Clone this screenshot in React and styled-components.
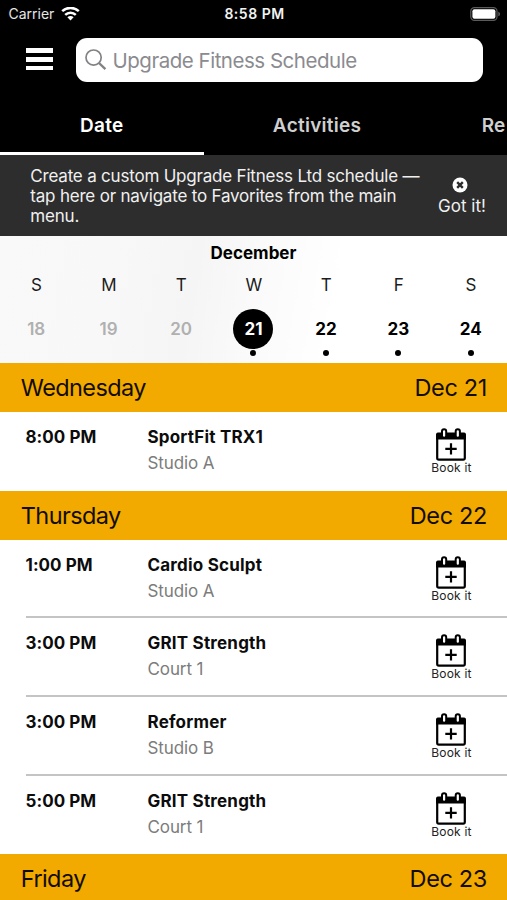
import React from "react"
import styled, { createGlobalStyle } from "styled-components"

const week = [
    { letter: "S", day: 18, past: true },
    { letter: "M", day: 19, past: true },
    { letter: "T", day: 20, past: true },
    { letter: "W", day: 21, selected: true },
    { letter: "T", day: 22 },
    { letter: "F", day: 23 },
    { letter: "S", day: 24 },
]

const schedule = [
    {
        name: "Wednesday",
        date: "Dec 21",
        classes: [{ time: "8:00 PM", title: "SportFit TRX1", room: "Studio A" }],
    },
    {
        name: "Thursday",
        date: "Dec 22",
        classes: [
            { time: "1:00 PM", title: "Cardio Sculpt", room: "Studio A" },
            { time: "3:00 PM", title: "GRIT Strength", room: "Court 1" },
            { time: "3:00 PM", title: "Reformer", room: "Studio B" },
            { time: "5:00 PM", title: "GRIT Strength", room: "Court 1" },
        ],
    },
    { name: "Friday", date: "Dec 23", classes: [] },
]

const WifiIcon = () => (
    <svg width="19" height="14" viewBox="0 0 19 14" fill="none" stroke="#fff" strokeWidth="2.5">
        <path d="M1.2 4.2C5.8 -0.2 13.2 -0.2 17.8 4.2" />
        <path d="M4.2 7.9C7.2 5 11.8 5 14.8 7.9" />
        <path d="M9.5 13.4L6.4 10.3C8.2 8.6 10.8 8.6 12.6 10.3Z" fill="#fff" stroke="none" />
    </svg>
)

const BatteryIcon = () => (
    <svg width="31" height="14" viewBox="0 0 31 14">
        <rect x="0.8" y="0.6" width="26.2" height="12.8" rx="3.6" fill="none" stroke="#5b5b5d" strokeWidth="1.2" />
        <rect x="2.4" y="2.2" width="23" height="9.6" rx="2" fill="#fff" />
        <path d="M28.4 4.7C30.4 5.4 30.4 8.6 28.4 9.3Z" fill="#6b6b6d" />
    </svg>
)

const SearchIcon = () => (
    <svg width="22" height="22" viewBox="0 0 22 22" fill="none" stroke="#828286">
        <circle cx="8.6" cy="8.6" r="7.6" strokeWidth="1.7" />
        <path d="M14 14L20.4 20.2" strokeWidth="2.4" />
    </svg>
)

const CloseIcon = () => (
    <svg width="16" height="16" viewBox="0 0 16 16">
        <circle cx="8" cy="8" r="7.5" fill="#fff" />
        <path d="M5.2 5.2L10.8 10.8M10.8 5.2L5.2 10.8" stroke="#2d2d2d" strokeWidth="2.4" />
    </svg>
)

const CalendarIcon = () => (
    <svg width="30" height="33" viewBox="0 0 30 33">
        <rect x="1.2" y="6" width="27.6" height="25.6" rx="1.6" fill="#fff" stroke="#000" strokeWidth="2.2" />
        <path d="M0.1 11.6V6.2Q0.1 4.4 1.9 4.4H28.1Q29.9 4.4 29.9 6.2V11.6Z" fill="#000" />
        <rect x="6" y="1.2" width="4.2" height="8.6" rx="2.1" fill="#fff" stroke="#000" strokeWidth="2" />
        <rect x="19.7" y="1.2" width="4.2" height="8.6" rx="2.1" fill="#fff" stroke="#000" strokeWidth="2" />
        <path d="M15 15.2V26.6M9.3 20.9H20.7" stroke="#000" strokeWidth="2.2" />
    </svg>
)

const Day = ({ letter, day, past, selected }) => (
    <DayColumn>
        <Letter>{letter}</Letter>
        <DayNumber $past={past} $selected={selected}>{day}</DayNumber>
        {!past && <Dot />}
    </DayColumn>
)

const ClassRow = ({ time, title, room }) => (
    <Row>
        <Time>{time}</Time>
        <Info>
            <Title>{title}</Title>
            <Room>{room}</Room>
        </Info>
        <Book>
            <CalendarIcon />
            <BookLabel>Book it</BookLabel>
        </Book>
    </Row>
)

const App = () => {
    return (
        <Screen>
            <GlobalStyle />
            <StatusBar>
                <Carrier>Carrier <WifiIcon /></Carrier>
                <Clock>8:58 PM</Clock>
                <Battery><BatteryIcon /></Battery>
            </StatusBar>
            <SearchBar>
                <Menu>
                    <MenuLine />
                    <MenuLine />
                    <MenuLine />
                </Menu>
                <SearchField>
                    <SearchIcon />
                    <Placeholder>Upgrade Fitness Schedule</Placeholder>
                </SearchField>
            </SearchBar>
            <Tabs>
                <Tab $width={203.5} $active>Date</Tab>
                <Tab $width={227}>Activities</Tab>
                <LastTab $width={76.5}>Re</LastTab>
            </Tabs>
            <Banner>
                <BannerText>
                    <div>Create a custom Upgrade Fitness Ltd schedule —</div>
                    <div>tap here or navigate to Favorites from the main</div>
                    <div>menu.</div>
                </BannerText>
                <GotIt>
                    <CloseIcon />
                    <GotItLabel>Got it!</GotItLabel>
                </GotIt>
            </Banner>
            <Calendar>
                <Month>December</Month>
                <Week>
                    {week.map((d) => <Day key={d.day} {...d} />)}
                </Week>
            </Calendar>
            {schedule.map((s) => (
                <section key={s.name}>
                    <DayHeader>
                        <DayName>{s.name}</DayName>
                        <DayDate>{s.date}</DayDate>
                    </DayHeader>
                    {s.classes.map((c, i) => <ClassRow key={i} {...c} />)}
                </section>
            ))}
        </Screen>
    )
}

export default App


const GlobalStyle = createGlobalStyle`
    body {
        margin: 0;
        background: #fff;
    }
    * {
        box-sizing: border-box;
    }
    svg {
        display: block;
        flex: none;
    }
`

const Screen = styled.div`
    width: 507px;
    height: 900px;
    overflow: hidden;
    background: #fff;
    color: #0c0c0c;
    font-family: Inter, "Liberation Sans", sans-serif;
    white-space: nowrap;
`

const StatusBar = styled.div`
    display: grid;
    grid-template-columns: 1fr auto 1fr;
    align-items: center;
    height: 27px;
    padding: 0 6.5px 0 8.5px;
    background: #000;
    color: #e6e6e6;
    font-size: 14px;
    line-height: 27px;
`

const Carrier = styled.div`
    display: flex;
    align-items: center;
    gap: 6.5px;
`

const Clock = styled.div`
    color: #f2f2f2;
    font-weight: 600;
    font-size: 14px;
    letter-spacing: 0.5px;
`

const Battery = styled.div`
    display: flex;
    justify-content: flex-end;
`

const SearchBar = styled.div`
    display: flex;
    align-items: flex-start;
    height: 69px;
    padding: 10.5px 24.5px 0 25.5px;
    background: #000;
`

const Menu = styled.div`
    display: flex;
    flex-direction: column;
    gap: 4px;
    width: 50px;
    padding-top: 10.5px;
`

const MenuLine = styled.div`
    width: 27px;
    height: 4.8px;
    background: #fff;
`

const SearchField = styled.div`
    display: flex;
    flex: 1;
    align-items: center;
    height: 44px;
    padding-left: 9px;
    border-radius: 11px;
    background: #fff;
`

const Placeholder = styled.div`
    margin: 1px 0 0 6px;
    color: #8b8b8f;
    font-size: 20.5px;
    letter-spacing: -0.48px;
`

const Tabs = styled.div`
    display: flex;
    height: 58.5px;
    background: #000;
    overflow: hidden;
`

const Tab = styled.div`
    flex: none;
    width: ${(props) => props.$width}px;
    border-bottom: 3.5px solid ${(props) => (props.$active ? "#fff" : "#000")};
    color: ${(props) => (props.$active ? "#fff" : "#cfcfcf")};
    font-size: 19px;
    font-weight: 600;
    letter-spacing: 0.25px;
    line-height: 59px;
    text-align: center;
`

const LastTab = styled(Tab)`
    padding-left: 51.3px;
    letter-spacing: 0;
    text-align: left;
`

const Banner = styled.div`
    display: flex;
    height: 81px;
    background: #2d2d2d;
    color: #f0f0f0;
    font-size: 17px;
    letter-spacing: -0.2px;
`

const BannerText = styled.div`
    width: 412px;
    padding: 11px 0 0 30.3px;
    line-height: 20.4px;
`

const GotIt = styled.div`
    display: flex;
    flex-direction: column;
    align-items: center;
    width: 98px;
    padding-top: 22.5px;
`

const GotItLabel = styled.div`
    margin-top: 3px;
    padding-left: 5px;
    line-height: 20px;
    letter-spacing: 0;
`

const Calendar = styled.div`
    height: 127.7px;
    padding-top: 7.5px;
    background: linear-gradient(100deg, #f9f9f9 0%, #f8f8f8 22%, #f5f5f5 38%, #fafafa 50%, #fff 66%);
`

const Month = styled.div`
    color: #000;
    font-size: 17px;
    font-weight: 700;
    line-height: 20px;
    text-align: center;
`

const Week = styled.div`
    display: grid;
    grid-template-columns: repeat(7, 1fr);
    margin-top: 11px;
`

const DayColumn = styled.div`
    display: flex;
    flex-direction: column;
    align-items: center;
`

const Letter = styled.div`
    padding-left: 0.6px;
    color: #1c1c1c;
    font-size: 17px;
    line-height: 22px;
`

const DayNumber = styled.div`
    width: 40px;
    height: 40px;
    margin-top: 13px;
    border-radius: 50%;
    background: ${(props) => (props.$selected ? "#000" : "transparent")};
    color: ${(props) => (props.$selected ? "#fff" : props.$past ? "#b0b0b0" : "#000")};
    font-size: 17px;
    font-weight: ${(props) => (props.$past ? 600 : 700)};
    line-height: 40px;
    text-align: center;
`

const Dot = styled.div`
    width: 6px;
    height: 6px;
    margin-top: 1px;
    border-radius: 50%;
    background: #000;
`

const DayHeader = styled.div`
    display: flex;
    justify-content: space-between;
    height: 49px;
    padding: 0 20px 0 20.8px;
    background: #f2a900;
    color: #120d00;
    font-size: 23.5px;
    line-height: 49px;
`

const DayName = styled.div`
    letter-spacing: -0.6px;
`

const DayDate = styled.div`
    letter-spacing: -0.35px;
`

const Row = styled.div`
    display: flex;
    height: 78.6px;
    margin-left: 25.5px;
    padding-top: 12px;
    border-bottom: 2px solid #c4c4c4;
    font-size: 17px;
    line-height: 26px;

    &:last-child {
        border-bottom: none;
    }
`

const Time = styled.div`
    width: 122px;
    font-weight: 700;
    letter-spacing: 0.05px;
`

const Info = styled.div`
    flex: 1;
`

const Title = styled.div`
    font-weight: 700;
    letter-spacing: 0.2px;
`

const Room = styled.div`
    color: #7c7c7c;
    letter-spacing: -0.1px;
`

const Book = styled.div`
    display: flex;
    flex-direction: column;
    align-items: center;
    width: 112px;
    padding-top: 4px;
`

const BookLabel = styled.div`
    padding-left: 1px;
    color: #222;
    font-size: 12px;
    line-height: 14px;
    letter-spacing: 0.2px;
`
